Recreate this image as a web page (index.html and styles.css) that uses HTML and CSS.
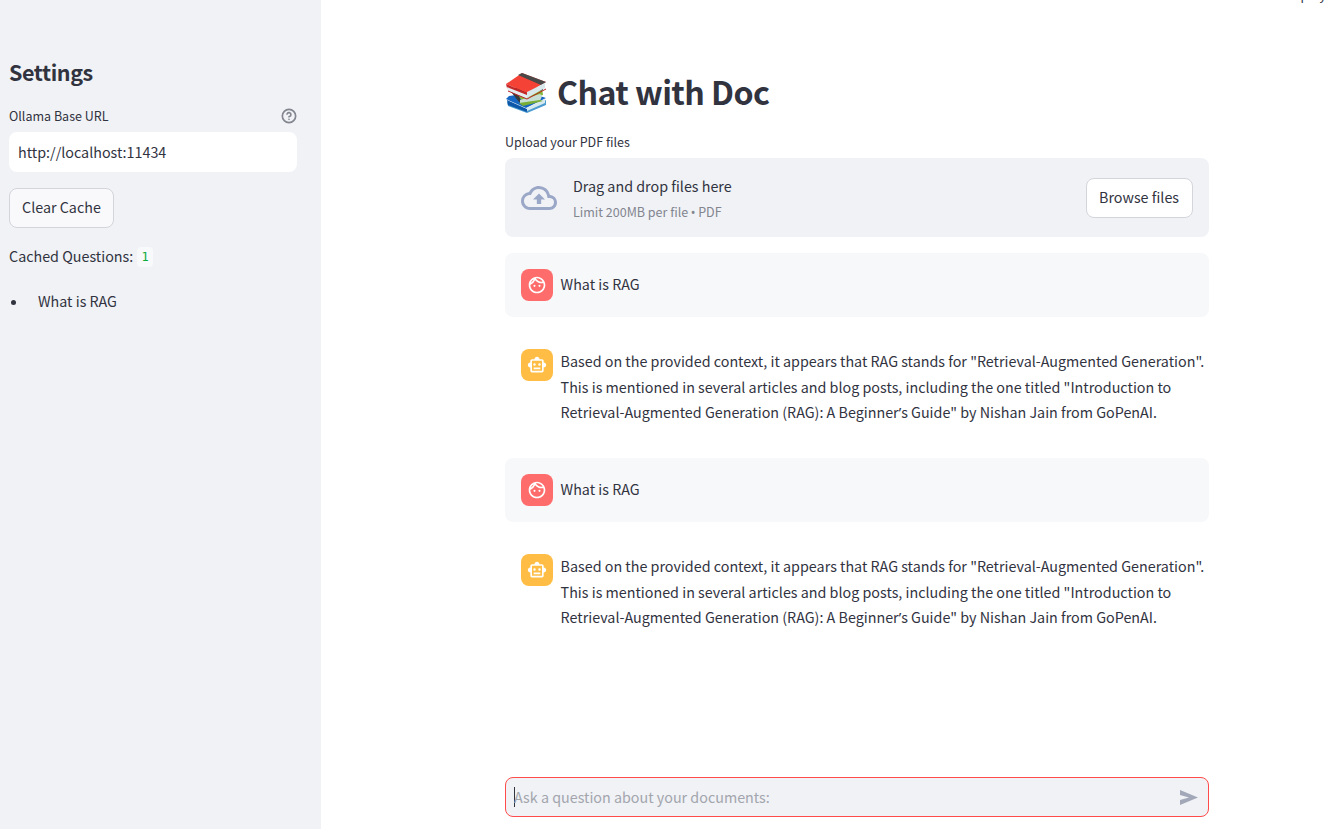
FILE: index.html
```html
<!DOCTYPE html>
<html lang="en">
<head>
<meta charset="utf-8">
<title>Chat with Doc</title>
<link rel="stylesheet" href="styles.css">
</head>
<body>
<svg class="defs" width="0" height="0">
  <symbol id="face" viewBox="0 0 24 24"><path d="M10.25 13a1.25 1.25 0 11-2.5 0 1.25 1.25 0 012.5 0zM15 11.75a1.25 1.25 0 100 2.5 1.25 1.25 0 000-2.5zm7 .25c0 5.52-4.48 10-10 10S2 17.52 2 12 6.48 2 12 2s10 4.48 10 10zM10.66 4.12C12.06 6.44 14.6 8 17.5 8c.46 0 .91-.05 1.34-.12C17.44 5.56 14.9 4 12 4c-.46 0-.91.05-1.34.12zM4.42 9.47a8.046 8.046 0 003.66-4.44 8.046 8.046 0 00-3.66 4.44zM20 12c0-.78-.12-1.53-.33-2.24-.7.15-1.42.24-2.17.24a10 10 0 01-7.76-3.69A10.016 10.016 0 014 11.86c.01.04 0 .09 0 .14 0 4.42 3.58 8 8 8s8-3.58 8-8z"/></symbol>
  <symbol id="robot" viewBox="0 0 24 24"><path d="M20 9V7c0-1.1-.9-2-2-2h-3c0-1.66-1.34-3-3-3S9 3.34 9 5H6c-1.1 0-2 .9-2 2v2c-1.66 0-3 1.34-3 3s1.34 3 3 3v4c0 1.1.9 2 2 2h12c1.1 0 2-.9 2-2v-4c1.66 0 3-1.34 3-3s-1.34-3-3-3zm-2 10H6V7h12v12zm-9-6a1.5 1.5 0 110-3 1.5 1.5 0 010 3zm7.5-1.5a1.5 1.5 0 11-3 0 1.5 1.5 0 013 0zM8 15h8v2H8v-2z"/></symbol>
</svg>
<div class="app">
  <aside class="sidebar">
    <h2 class="settings">Settings</h2>
    <div class="field-head">
      <span class="label">Ollama Base URL</span>
      <svg class="help" viewBox="0 0 24 24" fill="none" stroke="currentColor" stroke-width="2.5" stroke-linecap="round" stroke-linejoin="round"><circle cx="12" cy="12" r="10"/><path d="M9.09 9a3 3 0 0 1 5.83 1c0 2-3 3-3 3M12 17h.01"/></svg>
    </div>
    <div class="text-input">http://localhost:11434</div>
    <div class="button clear">Clear Cache</div>
    <div class="cached">Cached Questions: <code class="count">1</code></div>
    <div class="question"><i class="bullet"></i><span>What is RAG</span></div>
  </aside>
  <main class="main">
    <span class="deploy">Deploy</span>
    <div class="column">
      <h1 class="title">
        <svg class="books" viewBox="0 0 43 40">
          <path d="M2 29l20 8 19-10v5L22 40 3 33z" fill="#4b9bd0"/>
          <path d="M4 23L1 26l20 9 20-10-15-5z" fill="#1667c4"/>
          <path d="M2 27l20 9v3L3 32z" fill="#0d57a8"/>
          <path d="M22 35l18-9v4l-18 8z" fill="#d6e9ef"/>
          <path d="M4 16l14 12 20-6-1-7-13-4z" fill="#86b83c"/>
          <path d="M3 15l11 14 3 1-3-7 24-6v-2z" fill="#3b3b3b"/>
          <path d="M15 27l20-6 2 2-2 5-20 3z" fill="#c8dfd5"/>
          <path d="M14 30l21-3 3 1-20 5z" fill="#79ad35"/>
          <path d="M17 0l24 9-19 11L1 11z" fill="#f44336"/>
          <path d="M17 0l24 9-5 3L13 2z" fill="#484848"/>
          <path d="M1 11l21 9v3L2 15z" fill="#c62828"/>
          <path d="M2 14l20 8v4L3 18z" fill="#e4eef1"/>
          <path d="M22 19l18-9v5l-18 10z" fill="#d9e8ed"/>
          <path d="M3 18l19 8 19-10" fill="none" stroke="#b92323"/>
        </svg>
        <span>Chat with Doc</span>
      </h1>
      <div class="label upload-label">Upload your PDF files</div>
      <section class="dropzone">
        <svg class="cloud" viewBox="0 0 24 24"><path d="M19.35 10.04A7.49 7.49 0 0012 4C9.11 4 6.6 5.64 5.35 8.04A5.994 5.994 0 000 14c0 3.31 2.69 6 6 6h13c2.76 0 5-2.24 5-5 0-2.64-2.05-4.78-4.65-4.96zM19 18H6c-2.21 0-4-1.79-4-4 0-2.05 1.53-3.76 3.56-3.97l1.07-.11.5-.95A5.469 5.469 0 0112 6c2.62 0 4.88 1.86 5.39 4.43l.3 1.5 1.53.11A2.98 2.98 0 0122 15c0 1.65-1.35 3-3 3zM8 13h2.55v3h2.9v-3H16l-4-4z"/></svg>
        <div class="drop-text"><div>Drag and drop files here</div><div class="limit">Limit 200MB per file <span class="dot">•</span> PDF</div></div>
        <div class="button browse">Browse files</div>
      </section>
      <div class="message user"><span class="avatar"><svg><use href="#face"/></svg></span><div class="body">What is RAG</div></div>
      <div class="message bot"><span class="avatar"><svg><use href="#robot"/></svg></span><div class="body">Based on the provided context, it appears that RAG stands for "Retrieval-Augmented Generation".<br>This is mentioned in several articles and blog posts, including the one titled "Introduction to<br>Retrieval-Augmented Generation (RAG): A Beginner<span class="apos">’</span>s Guide" by Nishan Jain from GoPenAI.</div></div>
      <div class="message user"><span class="avatar"><svg><use href="#face"/></svg></span><div class="body">What is RAG</div></div>
      <div class="message bot"><span class="avatar"><svg><use href="#robot"/></svg></span><div class="body">Based on the provided context, it appears that RAG stands for "Retrieval-Augmented Generation".<br>This is mentioned in several articles and blog posts, including the one titled "Introduction to<br>Retrieval-Augmented Generation (RAG): A Beginner<span class="apos">’</span>s Guide" by Nishan Jain from GoPenAI.</div></div>
      <div class="chat-input"><i class="caret"></i><span class="placeholder">Ask a question about your documents:</span><svg class="send" viewBox="0 0 18 15"><path d="M0 0l18 7.5L0 15V10l9-2.5L0 5z"/></svg></div>
    </div>
  </main>
</div>
</body>
</html>
```
FILE: styles.css
```css
* { box-sizing: border-box; }
body {
  margin: 0;
  color: #31333f;
  background: #fff;
  font: 14.32px/25.6px "Source Sans Pro", "Noto Sans CJK SC", sans-serif;
  overflow: hidden;
}
.defs { position: absolute; }
.app { display: flex; height: 829px; }
.sidebar { width: 321px; padding: 57px 24px 0 9px; background: #f0f2f6; white-space: nowrap; }
.settings { margin: 0; font-size: 21.5px; line-height: 29px; font-weight: 600; letter-spacing: -0.4px; }
.label { font-size: 12.53px; line-height: 21px; }
.field-head { display: flex; justify-content: space-between; align-items: center; height: 22px; margin-top: 19px; }
.field-head .label { padding-bottom: 2px; }
.help { width: 16px; height: 16px; color: #83858f; }
.text-input { height: 40px; margin-top: 5px; padding: 7px 9px; background: #fff; border-radius: 8px; }
.button { height: 40px; padding: 5px 12px; border: 1px solid #d3d5da; border-radius: 8px; white-space: nowrap; }
.clear { width: 105px; margin-top: 16px; background: #f9f9fb; }
.cached { display: flex; align-items: center; gap: 4px; height: 26px; margin-top: 15px; }
.count { width: 16px; height: 20px; margin-top: 1px; border-radius: 4px; background: #f8f9fb; color: #09ab3b; font: 12px/20px "DejaVu Sans Mono", monospace; text-align: center; }
.question { display: flex; align-items: center; gap: 22px; height: 26px; margin-top: 19px; padding-left: 2px; }
.bullet { width: 5px; height: 5px; margin-top: 2px; border-radius: 50%; background: #31333f; }
.main { position: relative; flex: 1; padding-left: 184px; white-space: nowrap; }
.deploy { position: absolute; right: -2px; top: -17px; font-size: 12.53px; line-height: 24px; }
.column { display: flex; flex-direction: column; width: 704px; height: 829px; padding-top: 66px; }
.title { display: flex; align-items: center; gap: 9px; height: 53px; margin: 0; font-size: 32.2px; line-height: 51px; font-weight: 600; letter-spacing: -0.6px; }
.title span { padding-bottom: 2px; }
.books { width: 43px; height: 40px; }
.upload-label { margin-top: 12px; }
.dropzone { display: flex; align-items: center; height: 79px; margin-top: 6px; padding: 0 16px; background: #f0f2f6; border-radius: 8px; }
.cloud { width: 36px; height: 36px; margin-right: 16px; fill: #9aa7c7; }
.drop-text { flex: 1; padding-top: 2px; }
.limit { height: 25.6px; font-size: 12.53px; color: #83858f; }
.dot, .apos { font-family: "Noto Sans", sans-serif; line-height: 1; }
.dot { display: inline-block; width: 5px; margin: 0 -0.3px; text-indent: 0; }
.browse { width: 107px; background: #fff; }
.message { display: flex; gap: 7.6px; margin-top: 16px; padding: 16px; border-radius: 8px; }
.user { height: 64px; background: #f7f8fa; }
.bot { height: 109px; }
.avatar { display: flex; align-items: center; justify-content: center; width: 32px; height: 32px; flex: none; border-radius: 8px; background: #ff6c6c; }
.bot .avatar { background: #ffbd45; }
.avatar svg { width: 20px; height: 20px; fill: #fff; }
.body { margin-top: -1px; }
.user .body { padding-top: 3px; }
.chat-input { display: flex; align-items: center; height: 40px; margin: auto 0 12px; padding: 0 10px 0 8px; border: 1px solid #ff4b4b; border-radius: 8px; background: #f0f2f6; }
.caret { width: 1px; height: 20px; margin-right: -1px; background: #31333f; }
.placeholder { flex: 1; color: #a3a5ad; }
.send { width: 18px; height: 15px; fill: #a3a8b8; }
```
